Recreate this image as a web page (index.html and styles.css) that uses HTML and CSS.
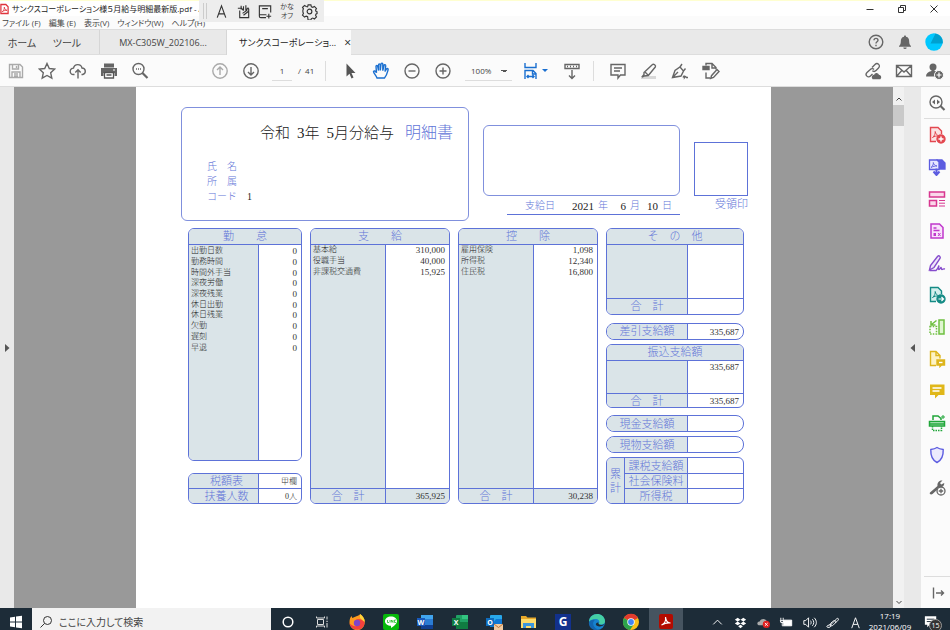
FILE: index.html
```html
<!DOCTYPE html>
<html lang="ja">
  <head>
    <meta charset="UTF-8" />
    <meta name="viewport" content="width=device-width, initial-scale=1.0" />
    <title>給与明細</title>
    <link rel="stylesheet" href="styles.css">
  </head>

  <body>
    <!-- タイトルバー -->
    <header class="titlebar">
      <svg class="app-icon" viewBox="0 0 10 12"><path d="M1 1h5.500l2.500 2.500V11H1z" fill="#fff" stroke="#e0343c" stroke-width="1.400"/><path d="M2.500 9c2-1.500 2.500-3.500 2.300-5 .3 2 1.200 3.200 3 3.500-2 0-4 .3-5.300 1.500z" fill="none" stroke="#e0343c"/></svg>
      <span class="title">サンクスコーポレーション様５月給与明細最新版.pdf - Adobe</span>
      <div class="window-btns">
        <button aria-label="最小化"><svg viewBox="0 0 12 12"><path d="M2.500 6.500h7"/></svg></button>
        <button aria-label="元に戻す"><svg viewBox="0 0 12 12"><path d="M2.500 4.500h5v5h-5zM4.500 4.500v-2h5v5h-2"/></svg></button>
        <button aria-label="閉じる"><svg viewBox="0 0 12 12"><path d="M2.500 2.500l7 7M9.500 2.500l-7 7"/></svg></button>
      </div>
    </header>

    <!-- IME ツールバー -->
    <div class="ime">
      <i class="grip"></i>
      <button aria-label="入力モード"><svg viewBox="0 0 18 18"><path d="M4.500 15.500L9 3l4.500 12.500M6 11.500h6"/></svg></button>
      <button aria-label="手書き"><svg viewBox="0 0 18 18"><path d="M5 8v7.500h9.500V6M3 5.500h4l2 2.500M9 8V3.500M11.500 8V2.500M6.500 3v4M14.500 6c-1-1.500-2 0-2 2L8 11M9 13l5-4"/></svg></button>
      <button aria-label="辞書"><svg viewBox="0 0 18 18"><path d="M9.500 15.500H4c-1 0-1.500-.5-1.500-1.500V3h12v7M3 12.500h7M5.500 6h6M12.500 11.500v5M10 14h5"/></svg></button>
      <button class="kana">かな<br>オフ</button>
      <button aria-label="設定"><svg viewBox="0 0 18 18"><circle cx="9" cy="9" r="2.500"/><path d="M7.500 2h3l.5 2 1.500.6 1.700-1 2.200 2.200-1 1.700.6 1.500 1 .2v2l-1 .4-.6 1.400 1 1.800-2.200 2.100-1.700-1-1.500.6-.5 1.500h-3L7 14.500l-1.500-.6-1.700 1-2.200-2.100 1-1.800L2 9.600V7.500l.6-1.300-1-1.500 2.200-2 1.700 1L7 4z"/></svg></button>
    </div>

    <nav class="menubar">
      <button>ファイル (F)</button>
      <button>編集 (E)</button>
      <button>表示(V)</button>
      <button>ウィンドウ(W)</button>
      <button>ヘルプ(H)</button>
    </nav>

    <!-- タブ -->
    <div class="tabs">
      <button class="home">ホーム</button>
      <button class="tool">ツール</button>
      <button class="tab">MX-C305W_202106...</button>
      <button class="tab active">サンクスコーポレーショ...<span class="close">×</span></button>
      <div class="account">
        <button aria-label="ヘルプ"><svg viewBox="0 0 18 18" class="line"><circle cx="9" cy="9" r="6.800"/><path d="M7 7.300c0-2.600 4-2.600 4 0C11 8.800 9 8.700 9 10.500M9 11.800v1.400"/></svg></button>
        <button aria-label="通知"><svg viewBox="0 0 18 18"><path d="M9 2.500c.8 0 1 .5 1 1.200 2.500.5 3.200 2.300 3.200 4.800 0 2.300.6 3.500 1.800 4.500v.8H3V13c1.200-1 1.800-2.200 1.800-4.500 0-2.500.7-4.300 3.200-4.800 0-.7.200-1.200 1-1.200zM7.300 14.500h3.400a1.700 1.500 0 0 1-3.400 0z" fill="#666"/></svg></button>
        <button aria-label="アカウント"><svg viewBox="0 0 18 18"><circle cx="9" cy="9" r="8.700" fill="#00c8ff"/><path d="M10.500.5a8.700 8.700 0 0 1 7.200 10H5.500z" fill="#00a0cf"/></svg></button>
      </div>
    </div>

    <!-- ツールバー -->
    <div class="toolbar">
      <div class="group">
        <button aria-label="保存"><svg viewBox="0 0 18 18" class="line light"><path d="M2.500 2.500h10.500l2.500 2.500v10.500h-13zM5.500 2.500v4.500h6v-4.500M9.500 4v2M5 15.500v-5.500h8v5.500M7 12h4M7 14h4"/></svg></button>
        <button aria-label="スター"><svg viewBox="0 0 18 18" class="line"><path d="M9 1.500l2.300 5 5.400.6-4 3.700 1.100 5.400L9 13.500l-4.800 2.700 1.100-5.400-4-3.700 5.400-.6z"/></svg></button>
        <button aria-label="アップロード"><svg viewBox="0 0 18 18" class="line"><path d="M5.500 12.500H4.300a3.200 3.200 0 0 1 .2-6.400C5.500 1.500 12 1.500 13 6a3.300 3.300 0 0 1 .8 6.500h-1.300M9 16.500V8M6.300 10.500L9 7.800l2.700 2.700"/></svg></button>
        <button aria-label="印刷"><svg viewBox="0 0 18 18"><path d="M4 1.500h10v4H4zM1 6h16v8h-2.500v-3H3.500v3H1z" fill="#666"/><path d="M4.500 10.500h9v5.500h-9zM6.500 13h5" fill="#fff" stroke="#555" stroke-width="1.300"/><path d="M13 8h2" stroke="#fff"/></svg></button>
        <button aria-label="検索"><svg viewBox="0 0 18 18" class="line"><circle cx="7.500" cy="7" r="5.500"/><path d="M5 7h1M7 7h1M9 7h1"/><path d="M11.500 11l5 5" stroke-width="2.200"/></svg></button>
      </div>
      <div class="group paging">
        <button aria-label="前のページ"><svg viewBox="0 0 18 18" class="line light"><circle cx="9" cy="9" r="7.200"/><path d="M9 13V5M6 8l3-3 3 3"/></svg></button>
        <button aria-label="次のページ"><svg viewBox="0 0 18 18" class="line"><circle cx="9" cy="9" r="7.200"/><path d="M9 5v8M6 10l3 3 3-3"/></svg></button>
        <input type="text" class="page-no" value="1" aria-label="ページ番号">
        <span class="total">/&nbsp; 41</span>
      </div>
      <div class="group split">
        <button aria-label="選択"><svg viewBox="0 0 18 18"><path d="M5.500 1.500v13l3-2.800 2 4.800 2-.9-2-4.600h4z" fill="#555"/></svg></button>
        <button aria-label="手のひら"><svg viewBox="0 0 18 18" class="line blue"><path d="M5 16C4 13.500 1.500 11 1.500 9.500c.5-1 1.800-.8 3 1.200L4 4.500c0-1.300 1.500-1.300 1.700 0l.8 4V3c0-1.500 1.700-1.500 1.800 0v5.500L9 2c.2-1.300 1.800-1.200 1.800.2v6.500l1.200-5.200c.4-1.200 1.800-.8 1.700.4L13 9.500l1.500-2.500c.8-1 2-.3 1.600.8-.6 2.200-1.300 5.700-3.600 8.200z"/></svg></button>
        <button aria-label="縮小"><svg viewBox="0 0 18 18" class="line"><circle cx="9" cy="9" r="7"/><path d="M5.500 9h7"/></svg></button>
        <button aria-label="拡大"><svg viewBox="0 0 18 18" class="line"><circle cx="9" cy="9" r="7"/><path d="M5.500 9h7M9 5.500v7"/></svg></button>
        <select class="zoom" aria-label="ズーム"><option>100%</option></select>
        <button class="fit" aria-label="幅に合わせる"><svg viewBox="0 0 18 18" class="line blue"><path d="M3 1v4.500h11V1M3 17V8.500h8l3 3V17M10.500 8.500V12H14M5 14.500h7M6.500 13L5 14.500 6.500 16M10.500 13l1.500 1.500-1.500 1.500"/></svg><i class="caret"></i></button>
        <button aria-label="スクロール"><svg viewBox="0 0 18 18" class="line"><path d="M2 2.500h14v4H2zM4 4.500h1M7 4.500h1M10 4.500h1M13 4.500h1M9 8v8M6 13.500l3 3 3-3"/></svg></button>
      </div>
      <div class="group split">
        <button aria-label="コメント"><svg viewBox="0 0 18 18" class="line"><path d="M2 2.500h14v10.500h-4.500L9 16v-3H2zM5 6h8M5 9h6"/></svg></button>
        <button aria-label="ハイライト"><svg viewBox="0 0 18 18" class="line"><path d="M1 15.500h15" stroke="#d8d8d8" stroke-width="3"/><path d="M4 10.500L12.500 2.500c1-1 3.800 1 2.800 2.500l-7 8.500-4.300.5-2 1 2-2.500zM5 10l3 3"/></svg></button>
        <button aria-label="署名"><svg viewBox="0 0 18 18" class="line"><path d="M1.500 15.500L4 8.500 9 5l3.500 4-2.500 5zM1.500 15.500L7 10M9 5l2-3M12.500 9l2-2.500M12 15.500c1-2 1.500-2 1.500 0 1-1.500 1.500-1 2 0h1.500"/></svg></button>
        <button aria-label="スタンプ"><svg viewBox="0 0 18 18" class="line"><path d="M4 3.500V1.500h6l4 4v2M10 1.500V6h4M4 10.500v5.500h4"/><path d="M1 4.500h6v3H1z" fill="#666"/><path d="M15 7.500l2 2-5.500 6-2.800 1 .8-2.800z"/></svg></button>
      </div>
      <div class="group share">
        <button aria-label="リンク"><svg viewBox="0 0 18 18" class="line"><path d="M8 5.500l3-3c2.500-2.500 6 1 3.500 3.500L12 8.500c-1.300 1.300-2.700 1-3.700.3M10 7.500c-1-1.300-2.700-1-3.700 0L3 10.500C.5 13 4 16.500 6.500 14L8.500 12"/><path d="M9 16.500c-1.500-2 .5-3.500 1.500-3 1-2.500 3.500-2 4 0 2-.3 2.500 2 1.500 3z" fill="#666"/></svg></button>
        <button aria-label="メール"><svg viewBox="0 0 18 18" class="line"><path d="M1.500 3.500h15v11h-15zM1.500 3.500L9 10l7.500-6.500M1.500 14.500l5.300-6M16.500 14.500l-5.300-6"/></svg></button>
        <button aria-label="ユーザー"><svg viewBox="0 0 18 18"><circle cx="7" cy="5" r="3.500" fill="#666"/><path d="M0 14.500c0-3 2-4.500 5.500-5.500V7h3v2l2 .8-1.500 4.700z" fill="#666"/><circle cx="13" cy="13" r="4.500" fill="#666" stroke="#fbfbfb"/><path d="M10.500 13h5M13 10.500v5" stroke="#fff" stroke-width="1.200"/></svg></button>
      </div>
    </div>

    <main class="viewer">
      <button class="pane-toggle" aria-label="ナビゲーションパネル"><svg viewBox="0 0 6 8"><path d="M1 0l4.500 4L1 8z"/></svg></button>

      <div class="desk">
        <article class="sheet">
          <div class="sheet-head">
            <div class="name-box">
              <h1><b>令和</b><b>3年</b><b>5月分給与</b><span>明細書</span></h1>
              <p>氏　名</p>
              <p>所　属</p>
              <p>コード<b>1</b></p>
            </div>
            <div class="company">
              <div class="company-box"></div>
              <div class="pay-date"><span>支給日</span><b class="year">2021</b><span>年</span><b>6</b><span>月</span><b>10</b><span>日</span></div>
            </div>
            <div class="stamp">
              <div class="stamp-box"></div>
              受領印
            </div>
          </div>

          <div class="columns">
            <!-- 勤怠 -->
            <div class="col attendance">
              <section class="panel grow">
                <h2>勤　　怠</h2>
                <div class="body">
                  <table class="items">
                    <tr><th>出勤日数</th><td>0</td></tr>
                    <tr><th>勤務時間</th><td>0</td></tr>
                    <tr><th>時間外手当</th><td>0</td></tr>
                    <tr><th>深夜労働</th><td>0</td></tr>
                    <tr><th>深夜残業</th><td>0</td></tr>
                    <tr><th>休日出勤</th><td>0</td></tr>
                    <tr><th>休日残業</th><td>0</td></tr>
                    <tr><th>欠勤</th><td>0</td></tr>
                    <tr><th>遅刻</th><td>0</td></tr>
                    <tr><th>早退</th><td>0</td></tr>
                  </table>
                </div>
              </section>
              <section class="panel">
                <table class="rows">
                  <tr><th>税額表</th><td>甲欄</td></tr>
                  <tr><th>扶養人数</th><td>0人</td></tr>
                </table>
              </section>
            </div>

            <!-- 支給 -->
            <section class="panel pay">
              <h2>支　　給</h2>
              <div class="body">
                <table class="items short">
                  <tr><th>基本給</th><td>310,000</td></tr>
                  <tr><th>役職手当</th><td>40,000</td></tr>
                  <tr><th>非課税交通費</th><td>15,925</td></tr>
                </table>
              </div>
              <table class="rows sum tinted">
                <tr><th>合　計</th><td>365,925</td></tr>
              </table>
            </section>

            <!-- 控除 -->
            <section class="panel pay">
              <h2>控　　除</h2>
              <div class="body">
                <table class="items short">
                  <tr><th>雇用保険</th><td>1,098</td></tr>
                  <tr><th>所得税</th><td>12,340</td></tr>
                  <tr><th>住民税</th><td>16,800</td></tr>
                </table>
              </div>
              <table class="rows sum tinted">
                <tr><th>合　計</th><td>30,238</td></tr>
              </table>
            </section>

            <!-- その他 -->
            <div class="col others">
              <section class="panel other">
                <h2>そ　の　他</h2>
                <div class="body"></div>
                <table class="rows sum"><tr><th>合　計</th><td></td></tr></table>
              </section>
              <section class="panel pill">
                <table class="rows"><tr><th>差引支給額</th><td>335,687</td></tr></table>
              </section>
              <section class="panel transfer">
                <h2>振込支給額</h2>
                <div class="body">
                  <table class="items single"><tr><th></th><td>335,687</td></tr></table>
                </div>
                <table class="rows sum"><tr><th>合　計</th><td>335,687</td></tr></table>
              </section>
              <section class="panel pill">
                <table class="rows"><tr><th>現金支給額</th><td></td></tr></table>
              </section>
              <section class="panel pill">
                <table class="rows"><tr><th>現物支給額</th><td></td></tr></table>
              </section>
              <section class="panel">
                <table class="rows total-rows">
                  <tr><th rowspan="3" class="side">累<br>計</th><th>課税支給額</th><td></td></tr>
                  <tr><th>社会保険料</th><td></td></tr>
                  <tr><th>所得税</th><td></td></tr>
                </table>
              </section>
            </div>
          </div>
        </article>
      </div>

      <div class="scrollbar">
        <button aria-label="上へ"><svg viewBox="0 0 8 8"><path d="M1.500 5.500L4 3l2.500 2.500"/></svg></button>
        <div class="thumb"></div>
        <button class="down" aria-label="下へ"><svg viewBox="0 0 8 8"><path d="M1.500 3L4 5.500 6.500 3"/></svg></button>
      </div>
      <button class="pane-toggle right" aria-label="ツールパネル"><svg viewBox="0 0 6 8"><path d="M5 0L.5 4 5 8z"/></svg></button>

      <aside class="tools">
        <button class="first" aria-label="検索"><svg viewBox="0 0 18 18" class="line"><circle cx="8" cy="8" r="6"/><path d="M7 5.500L4 8l3 2.500zM9 5.500L12 8l-3 2.500z" fill="#666" stroke="none"/><path d="M12.500 12l4 4" stroke-width="2.200"/></svg></button>
        <button aria-label="PDFを作成"><svg viewBox="0 0 18 18" fill="none" stroke="#e34850" stroke-width="1.400"><path d="M8 15.500H2.500v-14h7.500l3.500 3.500v3" fill="#fbe3e4"/><path d="M4.500 11.500c2-1.500 3-4 2.700-6 .5 2.500 1.800 4 4 4.300-2.500 0-5 .5-6.700 1.700z" stroke-width="1"/><circle cx="13" cy="13" r="4" fill="#e34850"/><path d="M10.500 13h5M13 10.500v5" stroke="#fff"/></svg></button>
        <button aria-label="ファイルを結合"><svg viewBox="0 0 18 18" fill="none" stroke="#5c5ce0" stroke-width="1.300"><path d="M9 2h5l3 3v6h-6V5H9z" fill="#5c5ce0"/><path d="M1.500 2H9l2 2v7.500H1.500z" fill="#e5e5ff"/><path d="M3 9.500c2-1.500 2.500-3.500 2.300-5 .3 2 1.700 3 3.700 3.500-2 0-4 .3-6 1.500z" stroke-width=".9"/><path d="M8.500 10.500V17M5.500 13.500l3 3.500 3-3.500" stroke-width="2"/></svg></button>
        <button aria-label="ページを整理"><svg viewBox="0 0 18 18" fill="#fbd7ea" stroke="#d83790" stroke-width="1.500"><path d="M1.500 2h15v5h-15zM1.500 10.500h7v5.500h-7z"/><path d="M11 10.500h6M11 13.200h6M11 16h6" stroke-width="1"/></svg></button>
        <button aria-label="PDFを編集"><svg viewBox="0 0 18 18" fill="#f9e2fb" stroke="#c038cc" stroke-width="1.500"><path d="M3 2h8.500L15 5.500V16H3z"/><path d="M5.500 6h3M5.500 8.500h6" /><path d="M5.500 11h2.500v3H5.500z" fill="#c038cc" stroke="none"/><path d="M10 11l2.500 3M12.500 11L10 14" stroke-width="1"/></svg></button>
        <button aria-label="入力と署名"><svg viewBox="0 0 18 18" fill="#efe5fb" stroke="#864ccc" stroke-width="1.400"><path d="M1.500 16l1-4.500L9.500 2.500c1.500-1.500 3.500 0 2.500 2L6 13.500z"/><path d="M1.500 16.500h6.500c2-2 3-5 3-5s-1 4 0 4c1 0 1.500-2 2-2s0 2 1 2 1-1 3-.5" fill="none"/></svg></button>
        <button aria-label="PDFを書き出し"><svg viewBox="0 0 18 18" fill="none" stroke="#158b85" stroke-width="1.400"><path d="M8 15.500H2.500v-14h7.500l3.500 3.500v3" fill="#d4efed"/><path d="M4.500 11.500c2-1.500 3-4 2.700-6 .5 2.500 1.800 4 4 4.300-2.500 0-5 .5-6.700 1.700z" stroke-width="1"/><circle cx="13" cy="13" r="4" fill="#158b85"/><path d="M10.500 13h5M13.500 11l2 2-2 2" stroke="#fff" stroke-width="1.200"/></svg></button>
        <button aria-label="ページ整理"><svg viewBox="0 0 18 18" fill="none" stroke="#6fc040" stroke-width="1.500"><path d="M11 2h5v14h-5z" fill="#dff5d0"/><path d="M2 8.500h6.500V16H2z" stroke-dasharray="1.500 1.200"/><path d="M8.500 2.500l-5 4M3 3v4h4.500"/></svg></button>
        <button aria-label="レビュー用に送信"><svg viewBox="0 0 18 18" fill="#fdf3c4" stroke="#ddb51c" stroke-width="1.400"><path d="M8 15.500H2.500v-14h5.500l4 4v3M8 1.500v4h4"/><path d="M9 10h7.500v5h-3L12 16.500V15H9z" fill="#ddb51c"/><path d="M11 12.500h3.500" stroke="#fff"/></svg></button>
        <button aria-label="注釈"><svg viewBox="0 0 18 18"><path d="M2 2.500h14.500v10.500h-6L7 16.500V13H2z" fill="#e0b719"/><path d="M4.500 6h9M4.500 9h7" stroke="#fff" stroke-width="1.500"/></svg></button>
        <button aria-label="スキャン"><svg viewBox="0 0 18 18" fill="none" stroke="#20a63a" stroke-width="1.500"><path d="M5 6V2h5l3 2.500V6"/><path d="M1.500 12V7.500h15V12zM1.500 10h15" fill="#c5edce"/><path d="M4.500 12v4.500h9V12" stroke-dasharray="1.500 1"/><path d="M15 1v4M13 3h4" stroke-width="1"/></svg></button>
        <button aria-label="保護"><svg viewBox="0 0 18 18" fill="none" stroke="#5c5ce0" stroke-width="1.400"><path d="M9 1.500c2 1.300 4 1.700 6.200 2C15.500 10 14 14 9 16.500 4 14 2.500 10 2.800 3.500 5 3.200 7 2.800 9 1.500z" fill="#eceafd"/></svg></button>
        <button aria-label="ツールを追加"><svg viewBox="0 0 18 18"><path d="M2 14.500L9.500 8c-.5-3 1.500-6 5-5.500L12 5l1.200 1.500 3-1.500c.3 2-1.200 4.500-4.500 4.500L4.500 16c-1.500 1.200-3.700-.2-2.500-1.500z" fill="#666"/><circle cx="13" cy="13" r="4" fill="#fbfbfb" stroke="#666" stroke-width="1.300"/><path d="M10.800 13h4.400M13 10.800v4.400" stroke="#666" stroke-width="1.300"/></svg></button>
        <button class="last" aria-label="パネルを閉じる"><svg viewBox="0 0 18 18" class="line"><path d="M5.500 3.500v11M8 9h7.500M13 6.500L15.500 9 13 11.500"/></svg></button>
      </aside>
    </main>

    <!-- タスクバー -->
    <footer class="taskbar">
      <button class="start" aria-label="スタート"><svg viewBox="0 0 18 18"><path d="M3 4.500l5-.7v4.700H3zM9 3.600l6-.8v5.700H9zM3 9.500h5v4.700l-5-.7zM9 9.500h6v5.700l-6-.8z" fill="#fff"/></svg></button>
      <label class="search">
        <svg viewBox="0 0 14 14"><circle cx="8.500" cy="5.500" r="4"/><path d="M5.500 8.500L1.500 12.500"/></svg>
        <input type="text" placeholder="ここに入力して検索">
      </label>
      <nav class="apps">
        <button aria-label="Cortana"><svg viewBox="0 0 18 18"><circle cx="9" cy="9" r="4.800" fill="none" stroke="#fff" stroke-width="1.500"/></svg></button>
        <button aria-label="タスクビュー"><svg viewBox="0 0 18 18" fill="none" stroke="#ddd"><path d="M4.500 6.500h6v5h-6zM3.500 3.500V5h8V3.500M3.500 14.500V13h8v1.500M14 3.500v3M14 10v4.500M13.300 8.300h1.500"/></svg></button>
        <button aria-label="Firefox"><svg viewBox="0 0 18 18"><path d="M9 3c3-1 3-2 3-2 3 2 5 5 4.700 9A7.600 7.600 0 0 1 1.500 9c0-3 1-5 2-6l.8 2z" fill="#ff9a1f"/><path d="M16.500 9c.5 10-14 10-15 1 3 4 8 4 10 1 0-3-2-4-4-4 3-2 6-1 9 2z" fill="#f3413d"/><circle cx="9" cy="10" r="3.200" fill="#8044c8"/><path d="M12 1c3 2 5 5 4.700 8L12 5z" fill="#ffd43b"/></svg></button>
        <button aria-label="LINE"><svg viewBox="0 0 18 18"><rect x="1" y="1" width="16" height="16" rx="2" fill="#06b80b"/><path d="M9 3.500c3.300 0 6 2 6 4.700 0 2.300-3 4.800-6 6.800v-2.300c-3.300 0-6-1.800-6-4.500S5.700 3.500 9 3.500z" fill="#fff"/><path d="M5.500 7v2.500H7M8 7v2.500M9.300 9.500V7L11 9.500V7M14 7h-1.500v2.500H14" fill="none" stroke="#06b80b" stroke-width=".7"/></svg></button>
        <button aria-label="Word"><svg viewBox="0 0 18 18"><rect x="5" y="2" width="12" height="14" rx="1" fill="#2b7cd3"/><path d="M5 2h12v4H5z" fill="#41a5ee"/><path d="M5 12h12v4H5z" fill="#103f91"/><rect x="1" y="5" width="8" height="8" fill="#185abd"/><text x="5" y="11.500">W</text></svg></button>
        <button aria-label="Excel"><svg viewBox="0 0 18 18"><rect x="5" y="2" width="12" height="14" rx="1" fill="#21a366"/><path d="M5 9h12v7H5z" fill="#107c41"/><path d="M11 2h6v4h-6z" fill="#33c481"/><rect x="1" y="5" width="8" height="8" fill="#107c41"/><text x="5" y="11.500">X</text></svg></button>
        <button aria-label="Outlook"><svg viewBox="0 0 18 18"><rect x="5" y="2" width="12" height="12" rx="1" fill="#28a8ea"/><path d="M11 6h6v8H5z" fill="#0f78d4"/><rect x="1" y="5" width="8" height="8" fill="#0f6cbd"/><text x="5" y="11.500">O</text><path d="M9 11h9v6H9z" fill="#f2cba0"/><path d="M9 11l4.500 3.500L18 11" fill="none" stroke="#b9733c"/></svg></button>
        <button aria-label="エクスプローラー"><svg viewBox="0 0 18 18"><path d="M2 3h5l1.500 1.500H17V15H2z" fill="#e8a92a"/><path d="M2 6h15v9H2z" fill="#ffdc6b"/><path d="M4 15v-5h11v5h-3v-2H7v2z" fill="#3c97dd"/></svg></button>
        <button aria-label="G"><svg viewBox="0 0 18 18"><rect x="1" y="1" width="16" height="16" fill="#12318c"/><text x="9" y="13" class="big">G</text></svg></button>
        <button aria-label="Edge"><svg viewBox="0 0 18 18"><circle cx="9" cy="9" r="8" fill="#1682cf"/><path d="M1 9c0-10 15-11 16-1 .2 3-3.500 4.500-6.500 3 2-2 .5-5-2.500-5-3 0-6 1-7 3z" fill="#45cfa4"/><path d="M7 7c-4 3-1 9 4 9.500C5 18.500 0 14 1 9c1.500-2 4-2.500 6-2z" fill="#1265b0"/><path d="M10.500 9.500c-1 2 3 3.500 6 1.500-1 2-5 3.500-8 1.500-1.500-1.500 0-3 2-3z" fill="#1d2c38"/></svg></button>
        <button aria-label="Chrome"><svg viewBox="0 0 18 18"><circle cx="9" cy="9" r="8" fill="#fbc116"/><path d="M9 9L2 5a8 8 0 0 1 14 0z" fill="#e33b2e"/><path d="M9 9l-7-4a8 8 0 0 0 6 12l4-6z" fill="#2ca24c"/><circle cx="9" cy="9" r="3.700" fill="#fff"/><circle cx="9" cy="9" r="2.900" fill="#4285f4"/></svg></button>
        <button class="on" aria-label="Acrobat"><svg viewBox="0 0 18 18"><rect x="2" y="1" width="14" height="15" rx="2" fill="#b30b00"/><path d="M4.500 12c3-1 4.500-4.500 4-8 .3 3.500 2 6 5 6-3-.5-6 .3-9 2z" fill="none" stroke="#fff" stroke-width="1.200"/></svg></button>
      </nav>
      <div class="tray">
        <button aria-label="隠れたアイコン"><svg viewBox="0 0 18 18"><path d="M4.500 11L9 6.500l4.500 4.500"/></svg></button>
        <button aria-label="Dropbox"><svg viewBox="0 0 18 18"><path d="M6 4l3 2-3 2-3-2zM12 4l3 2-3 2-3-2zM6 8l3 2-3 2-3-2zM12 8l3 2-3 2-3-2zM9 11.500l2.500 1.500L9 15l-2.500-2z" fill="#fff" stroke="none"/></svg></button>
        <button aria-label="OneDrive"><svg viewBox="0 0 18 18"><path d="M4 12c-3-1-1-5 1-4 1.500-4 7-3 7.500 0 3 0 3 4 .5 4z" fill="#aaa" stroke="none"/><circle cx="12" cy="11" r="3.800" fill="#e02020" stroke="none"/><path d="M10.500 9.500l3 3M13.500 9.500l-3 3"/></svg></button>
        <button aria-label="電源"><svg viewBox="0 0 18 18"><path d="M6 6.500h8.500v6H6z" fill="#fff"/><path d="M3 4v4M5.500 4v4M2.500 7h3.500v2H3zM4.500 9v3.500H6"/></svg></button>
        <button aria-label="音量"><svg viewBox="0 0 18 18"><path d="M3 7h2l3-3v10l-3-3H3zM10 7c1 1 1 3 0 4M12 5.500c2 2 2 5 0 7M14 4c3 3 3 7 0 10"/></svg></button>
        <button aria-label="ペン"><svg viewBox="0 0 18 18"><path d="M3.500 14c-2-2 3-2 5-4l5-5c1-1 2.500 0 1.500 1.500l-5 5c-2 2-5 1-3-1.500l2-2c2-2 5-.5 3 1.500M3.500 14c3 1 4-1 4-3"/></svg></button>
        <button aria-label="入力"><svg viewBox="0 0 18 18"><path d="M5 15L9 4l4 11M6.500 11h5"/></svg></button>
        <div class="clock">17:19<br>2021/06/09</div>
        <button class="notice" aria-label="通知"><svg viewBox="0 0 18 18"><path d="M2 2.500h12v9H7L4.500 14v-2.500H2z" fill="#fff" stroke="none"/><path d="M4 5.500h8M4 8h8" stroke="#1d2c38"/></svg><span>15</span></button>
      </div>
    </footer>
  </body>
</html>
```
FILE: styles.css
```css
* {
  margin: 0;
  padding: 0;
  box-sizing: border-box;
}
body {
  display: flex;
  flex-direction: column;
  position: relative;
  height: 100vh;
  overflow: hidden;
  background-color: #fbfbfb;
  color: #444;
  font-family: "Open Sans", "Noto Sans CJK JP", sans-serif;
  font-size: 10px;
  font-feature-settings: "palt";
}
button {
  border: none;
  background: none;
  color: inherit;
  font: inherit;
  font-feature-settings: inherit;
  display: flex;
  align-items: center;
  justify-content: center;
  white-space: nowrap;
}
svg {
  flex: none;
  width: 18px;
  height: 18px;
  display: block;
}
.line {
  fill: none;
  stroke: #666;
  stroke-width: 1.4;
}
.line.light {
  stroke: #aaa;
}
.line.blue {
  stroke: #1a6fd0;
}

/* タイトルバー */
.titlebar {
  flex: none;
  height: 16px;
  display: flex;
  align-items: center;
  border-top: 1px solid #ffffd0;
  background-color: #fff;
  color: #222;
  font-size: 8px;
}
.app-icon {
  width: 9px;
  height: 12px;
  margin-right: 3px;
}
.title {
  flex: 1;
  white-space: nowrap;
}
.window-btns {
  display: flex;
}
.window-btns button {
  width: 32px;
}
.window-btns svg {
  width: 12px;
  height: 12px;
  fill: none;
  stroke: #333;
}

.ime {
  position: absolute;
  top: 0;
  left: 199px;
  z-index: 5;
  height: 22px;
  padding: 0 4px;
  display: flex;
  align-items: center;
  background-color: #ededed;
}
.ime button {
  width: 22px;
  height: 22px;
}
.ime svg {
  width: 17px;
  height: 17px;
  fill: none;
  stroke: #333;
  stroke-width: 1.2;
}
.ime .grip {
  width: 4px;
  height: 16px;
  margin-right: 3px;
  border: 1px solid #ccc;
  border-width: 0 1px;
}
.ime .kana {
  font-size: 7px;
  line-height: 9px;
}

.menubar {
  flex: none;
  height: 13px;
  display: flex;
  gap: 8px;
  padding-left: 2px;
  font-size: 8px;
  line-height: 13px;
}

/* タブ */
.tabs {
  flex: none;
  height: 26px;
  display: flex;
  border-top: 1px solid #ddd;
  border-bottom: 1px solid #ddd;
  background-color: #e9e9e9;
}
.tabs .home {
  width: 44px;
}
.tabs .tool {
  width: 46px;
  margin-right: 9px;
}
.tabs .tab {
  width: 127px;
  border-left: 1px solid #d6d6d6;
  font-size: 9px;
}
.tabs .active {
  width: 125px;
  height: 25px;
  padding-left: 12px;
  gap: 8px;
  background-color: #fbfbfb;
  color: #222;
}
.close {
  font-size: 12px;
}
.account {
  display: flex;
  margin-left: auto;
  padding-right: 2px;
}
.account button {
  width: 29px;
}

/* ツールバー */
.toolbar {
  flex: none;
  height: 32px;
  display: flex;
  align-items: center;
  border-bottom: 1px solid #ddd;
}
.group {
  display: flex;
  align-items: center;
}
.group button {
  width: 31px;
  height: 30px;
}
.paging {
  margin-left: 49px;
}
.page-no {
  width: 20px;
  height: 20px;
  margin: 0 6px;
  border: none;
  border-bottom: 1px solid #ddd;
  background: none;
  color: #444;
  font-family: inherit;
  font-size: 8px;
  text-align: center;
}
.total {
  width: 21px;
  font-size: 8px;
  white-space: nowrap;
}
.split {
  margin-left: 6px;
  padding-left: 8px;
  border-left: 1px solid #ddd;
  height: 20px;
}
.zoom {
  width: 47px;
  height: 20px;
  margin: 0 7px;
  padding-left: 6px;
  border: none;
  border-bottom: 1px solid #ddd;
  appearance: none;
  background: linear-gradient(to bottom right, #555 50%, transparent 50%) 39px 9px / 3px 3px no-repeat,
    linear-gradient(to bottom left, #555 50%, transparent 50%) 36px 9px / 3px 3px no-repeat;
  color: #444;
  font-family: inherit;
  font-size: 8px;
}
.group .fit {
  margin-right: 6px;
}
.caret {
  border: 3px solid transparent;
  border-top-color: #1a6fd0;
  border-bottom: none;
  margin-left: 2px;
}
.share {
  margin-left: auto;
}

.viewer {
  flex: 1;
  min-height: 0;
  display: flex;
}
.pane-toggle {
  width: 14px;
  background-color: #e9e9e9;
}
.pane-toggle svg {
  width: 6px;
  height: 8px;
  fill: #555;
}
.pane-toggle.right {
  width: 17px;
}
.desk {
  flex: 1;
  display: flex;
  justify-content: center;
  background-color: #999;
}
.scrollbar {
  width: 11px;
  display: flex;
  flex-direction: column;
  background-color: #f1f1f1;
}
.scrollbar button {
  height: 18px;
  padding-top: 6px;
}
.scrollbar svg {
  width: 8px;
  height: 8px;
  fill: none;
  stroke: #444;
}
.thumb {
  height: 21px;
  background-color: #c9c9c9;
}
.scrollbar .down {
  margin-top: auto;
}
.tools {
  width: 29px;
  display: flex;
  flex-direction: column;
  padding: 0 0 0 3px;
}
.tools button {
  height: 32px;
}
.tools .first {
  border-bottom: 1px solid #ddd;
}
.tools .last {
  margin-top: auto;
  border-top: 1px solid #ddd;
}

/* 明細書 */
.sheet {
  width: 635px;
  padding: 20px 23px 0 45px;
  background-color: #fff;
  color: #6275d8;
  font-family: "Liberation Serif", "Noto Sans CJK JP", serif;
  font-feature-settings: normal;
  font-weight: 300;
}
.sheet b {
  color: #222;
  font-weight: 300;
}
.sheet-head {
  display: flex;
  gap: 14px;
}
.name-box {
  width: 288px;
  height: 114px;
  padding: 13px 0 0 25px;
  border: 1px solid #8090dd;
  border-radius: 6px;
}
.name-box h1 {
  display: flex;
  gap: 7px;
  margin-bottom: 14px;
  padding-left: 53px;
  font-size: 15px;
  font-weight: 300;
  line-height: 24px;
}
.name-box h1 b {
  margin-left: 0;
}
.name-box h1 span {
  margin-left: 4px;
  font-size: 16px;
}
.name-box p {
  font-size: 10px;
  line-height: 15px;
}
.name-box b {
  margin-left: 10px;
}
.company {
  flex: 1;
  padding-top: 18px;
}
.company-box {
  height: 71px;
  border: 1px solid #8090dd;
  border-radius: 6px;
}
.pay-date {
  display: flex;
  gap: 4px;
  margin-left: 24px;
  padding: 2px 0 0 18px;
  border-bottom: 1px solid #5d72d8;
  font-size: 10px;
  line-height: 16px;
}
.pay-date b {
  width: 14px;
  font-size: 11px;
  text-align: right;
}
.pay-date .year {
  width: 35px;
}
.stamp {
  width: 54px;
  padding-top: 35px;
  font-size: 11px;
  line-height: 16px;
  text-align: right;
}
.stamp-box {
  height: 54px;
  border: 1px solid #5d72d8;
}

.columns {
  display: flex;
  gap: 8px;
  height: 276px;
  margin: 7px 4px 0 7px;
}
.col {
  display: flex;
  flex-direction: column;
}
.attendance {
  --label: 70px;
  width: 114px;
  gap: 12px;
}
.pay {
  --label: 75px;
  width: 140px;
}
.others {
  --label: 81px;
  width: 138px;
  gap: 4px;
}
.panel {
  display: flex;
  flex-direction: column;
  border: 1px solid #5d72d8;
  border-radius: 6px;
  overflow: hidden;
}
.grow {
  flex: 1;
}
.panel h2 {
  height: 16px;
  border-bottom: 1px solid #5d72d8;
  background-color: #dae4e8;
  font-size: 11px;
  font-weight: 300;
  line-height: 15px;
  text-align: center;
}
.body {
  flex: 1;
  background: linear-gradient(to right, #dae4e8 calc(var(--label) - 1px), #5d72d8 0 var(--label), #fff 0);
}
.attendance .body {
  padding-top: 1px;
}
.panel table {
  width: 100%;
  table-layout: fixed;
  border-collapse: separate;
  border-spacing: 0;
}
.panel th {
  font-weight: 300;
  white-space: nowrap;
}
.items {
  height: 107px;
  color: #222;
  font-size: 8px;
  line-height: 10px;
}
.items.short {
  height: 32px;
}
.items.single {
  height: 12px;
}
.items th {
  width: var(--label);
  padding-left: 2px;
  text-align: left;
}
.panel td {
  padding-right: 4px;
  color: #333;
  font-size: 9px;
  font-weight: 300;
  text-align: right;
}
.rows th,
.rows td {
  height: 15px;
  line-height: 14px;
}
.rows th {
  width: var(--label);
  border-right: 1px solid #5d72d8;
  background-color: #dae4e8;
  font-size: 11px;
}
.rows td {
  padding-top: 1px;
}
.attendance .rows th,
.attendance .rows td,
.pay .rows th,
.pay .rows td {
  height: 14px;
  line-height: 13px;
}
.attendance .rows th {
  padding-left: 6px;
}
.attendance .rows td {
  font-size: 8px;
}
.rows tr + tr > * {
  border-top: 1px solid #5d72d8;
}
.rows.sum {
  border-top: 1px solid #5d72d8;
}
.tinted td {
  background-color: #dae4e8;
}
.other {
  height: 87px;
  margin-bottom: 4px;
}
.transfer {
  height: 65px;
  margin-bottom: 3px;
}
.transfer .rows th,
.transfer .rows td {
  height: 13px;
  line-height: 12px;
}
.pill {
  border-radius: 8px;
}
.total-rows th {
  width: 63px;
}
.total-rows .side {
  width: 18px;
}

/* タスクバー */
.taskbar {
  flex: none;
  height: 22px;
  display: flex;
  align-items: flex-start;
  overflow: hidden;
  background-color: #1d2c38;
  color: #fff;
}
.taskbar button {
  height: 28px;
}
.start {
  width: 32px;
}
.search {
  width: 239px;
  height: 28px;
  display: flex;
  align-items: center;
  gap: 6px;
  padding-left: 7px;
  background-color: #f2f2f2;
}
.search svg {
  width: 14px;
  height: 14px;
  fill: none;
  stroke: #333;
}
.search input {
  flex: 1;
  min-width: 0;
  border: none;
  background: none;
  font-family: inherit;
  font-size: 10px;
  font-feature-settings: inherit;
}
.search input::placeholder {
  color: #444;
}
.apps {
  flex: 0 1 412px;
  display: flex;
}
.apps button {
  flex: 1;
}
.apps .on {
  background-color: #465460;
}
.apps text {
  fill: #fff;
  font-size: 7px;
  font-weight: 700;
  text-anchor: middle;
}
.apps .big {
  font-size: 12px;
}
.tray {
  display: flex;
  margin-left: auto;
}
.tray button {
  width: 23px;
}
.tray svg {
  width: 17px;
  height: 17px;
  fill: none;
  stroke: #fff;
}
.clock {
  width: 46px;
  padding-top: 2px;
  font-size: 8px;
  line-height: 11px;
  text-align: center;
  white-space: nowrap;
}
.tray .notice {
  position: relative;
  width: 37px;
}
.notice span {
  position: absolute;
  right: 8px;
  top: 11px;
  width: 13px;
  height: 13px;
  border: 1px solid #999;
  border-radius: 50%;
  background-color: #333;
  font-size: 7px;
  line-height: 11px;
  text-align: center;
}
```
